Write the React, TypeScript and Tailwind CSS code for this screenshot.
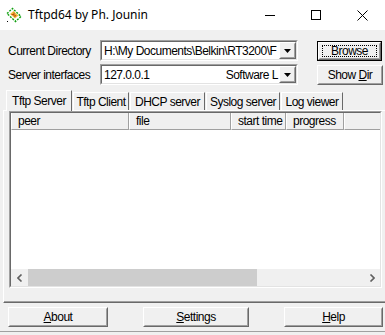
import React from 'react';

const ui = "font-['Liberation_Sans',Arial,sans-serif] text-[12px] tracking-[-0.5px] text-black whitespace-nowrap";

// classic raised frame: white / light outside, dark shadow bottom-right
function Raised({ className = '', children }: { className?: string; children?: React.ReactNode }) {
  return (
    <div className={`border border-t-white border-l-white border-b-[#696969] border-r-[#696969] ${className}`}>
      <div className="h-full border border-t-[#f0f0f0] border-l-[#f0f0f0] border-b-[#a0a0a0] border-r-[#a0a0a0] flex items-center justify-center">
        {children}
      </div>
    </div>
  );
}

function Sunken({ className = '', children }: { className?: string; children?: React.ReactNode }) {
  return (
    <div className={`border border-t-[#a0a0a0] border-l-[#a0a0a0] border-b-white border-r-white ${className}`}>
      <div className="h-full border border-t-[#696969] border-l-[#696969] border-b-[#e3e3e3] border-r-[#e3e3e3] bg-white overflow-hidden">
        {children}
      </div>
    </div>
  );
}

function DropArrow() {
  return (
    <Raised className="w-[17px] h-full shrink-0 bg-[#f0f0f0]">
      <svg width="7" height="4" viewBox="0 0 7 4">
        <path d="M0 0h7L3.5 4z" fill="#000" />
      </svg>
    </Raised>
  );
}

function Combo({ children }: { children: React.ReactNode }) {
  return (
    <Sunken className="w-[198px] h-[21px]">
      <div className="flex h-full">
        <div className="flex-1 flex items-center pl-[2px] pr-[1px] overflow-hidden">{children}</div>
        <DropArrow />
      </div>
    </Sunken>
  );
}

function TitleIcon() {
  return (
    <svg width="16" height="16" viewBox="0 0 16 16">
      <path d="M1 6.5l5.5-5 8.5 8-5.5 5z" fill="none" stroke="#10a010" strokeWidth="1.4" strokeDasharray="2 1.2" />
      <path d="M4 7l3.5-3 5 4.5-3.5 3z" fill="#f4c040" />
      <path d="M5.5 7.5l2 0M8 5.5v3.5M10 8l-1.5 2" stroke="#c05010" strokeWidth="1.1" />
      <rect x="1" y="14" width="1" height="1" fill="#000" />
    </svg>
  );
}

const tabs = ['Tftp Client', 'DHCP server', 'Syslog server', 'Log viewer'];
const tabW = ['w-[56px]', 'w-[75px]', 'w-[74px]', 'w-[62px]'];

const cols = [
  { label: 'peer', w: 'w-[118px]' },
  { label: 'file', w: 'w-[102px]' },
  { label: 'start time', w: 'w-[55px]' },
  { label: 'progress', w: 'w-[58px]' },
];

export default function App() {
  return (
    <div className={`w-[385px] h-[335px] overflow-hidden flex flex-col bg-[#f0f0f0] ${ui}`}>
      {/* title bar */}
      <div className="h-[30px] bg-white flex items-center shrink-0">
        <div className="ml-[6px] mr-[6px] flex items-center"><TitleIcon /></div>
        <span className="font-['Noto_Sans',sans-serif] text-[12px] tracking-normal text-black">Tftpd64 by Ph. Jounin</span>
        <div className="ml-auto flex h-full">
          <div className="w-[46px] h-full flex items-center justify-center">
            <div className="w-[10px] h-px bg-black" />
          </div>
          <div className="w-[46px] h-full flex items-center justify-center">
            <div className="w-[10px] h-[10px] border border-black" />
          </div>
          <div className="w-[46px] h-full flex items-center justify-center">
            <svg width="11" height="11" viewBox="0 0 11 11">
              <path d="M0.5 0.5l10 10M10.5 0.5l-10 10" stroke="#000" strokeWidth="1" />
            </svg>
          </div>
        </div>
      </div>

      {/* directory row */}
      <div className="flex items-center mt-[10px] h-[21px]">
        <span className="w-[100px] pl-[8px] shrink-0">Current Directory</span>
        <Combo>H:\My Documents\Belkin\RT3200\F</Combo>
        <div className="ml-[19px] w-[65px] h-[20px] border border-black">
          <Raised className="h-full">
            <div className="w-[55px] h-[12px] border border-dotted border-black flex items-center justify-center">Browse</div>
          </Raised>
        </div>
      </div>

      {/* interfaces row */}
      <div className="flex items-center mt-[3px] h-[21px]">
        <span className="w-[100px] pl-[8px] shrink-0">Server interfaces</span>
        <Combo>
          <span>127.0.0.1</span>
          <span className="ml-auto">Software L</span>
        </Combo>
        <Raised className="ml-[19px] w-[66px] h-[20px]">
          <span>Show <u>D</u>ir</span>
        </Raised>
      </div>

      {/* tabs */}
      <div className="flex items-end mt-[5px] h-[20px] pl-[6px] shrink-0">
        <div className="w-[66px] h-[21px] bg-[#f0f0f0] border-t border-l border-r border-t-white border-l-white border-r-[#696969] relative z-10 -mb-[1px] flex items-center justify-center pb-[1px]">
          Tftp Server
        </div>
        {tabs.map((t, i) => (
          <div
            key={t}
            className={`${tabW[i]} h-[18px] border-t border-l border-r border-t-white border-l-white border-r-[#696969] flex items-center justify-center ml-[1px]`}
          >
            {t}
          </div>
        ))}
      </div>

      {/* tab pane */}
      <div className="ml-[3px] w-[400px] h-[193px] border border-t-white border-l-white border-b-[#696969] border-r-[#696969] shrink-0">
        <div className="h-full border-b border-b-[#a0a0a0] pl-[5px]">
          <Sunken className="w-[373px] h-[177px]">
            <div className="flex flex-col h-full">
              {/* header */}
              <div className="flex h-[17px] shrink-0 bg-white">
                {cols.map((c) => (
                  <div
                    key={c.label}
                    className={`${c.w} h-full border-r border-b border-r-[#a0a0a0] border-b-[#a0a0a0] border-l border-l-white bg-[#f0f0f0] flex items-center pl-[6px] shrink-0`}
                  >
                    {c.label}
                  </div>
                ))}
                <div className="flex-1 h-full border-b border-b-[#a0a0a0] border-l border-l-white bg-[#f0f0f0]" />
              </div>
              <div className="flex-1" />
              {/* horizontal scrollbar */}
              <div className="h-[17px] bg-[#f0f0f0] flex items-center shrink-0">
                <div className="w-[17px] h-full flex items-center justify-center">
                  <svg width="6" height="8" viewBox="0 0 6 8">
                    <path d="M4.5 0.5L1 4l3.5 3.5" fill="none" stroke="#606060" strokeWidth="1.6" />
                  </svg>
                </div>
                <div className="w-[229px] h-full bg-[#cdcdcd]" />
                <div className="flex-1" />
                <div className="w-[17px] h-full flex items-center justify-center">
                  <svg width="6" height="8" viewBox="0 0 6 8">
                    <path d="M1.5 0.5L5 4L1.5 7.5" fill="none" stroke="#606060" strokeWidth="1.6" />
                  </svg>
                </div>
              </div>
            </div>
          </Sunken>
        </div>
      </div>

      {/* bottom buttons */}
      <div className="flex items-center h-[28px] shrink-0">
        <Raised className="ml-[8px] w-[100px] h-[20px]">
          <span><u>A</u>bout</span>
        </Raised>
        <Raised className="ml-[35px] w-[106px] h-[20px]">
          <span><u>S</u>ettings</span>
        </Raised>
        <Raised className="ml-[35px] w-[99px] h-[20px]">
          <span><u>H</u>elp</span>
        </Raised>
      </div>
      <div className="border-t border-t-[#a0a0a0] flex-1" />
    </div>
  );
}
